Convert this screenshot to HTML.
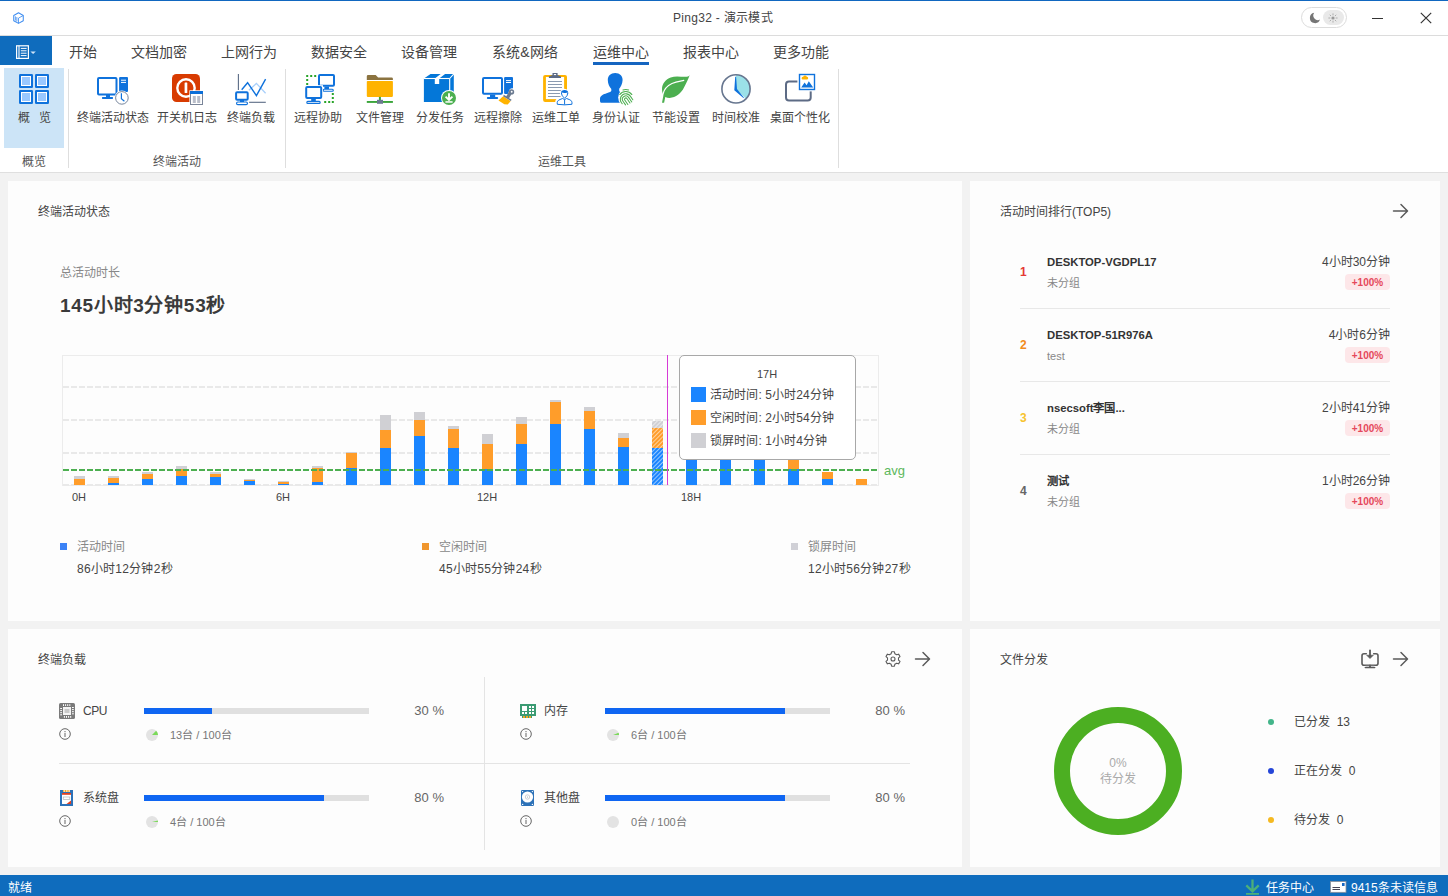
<!DOCTYPE html>
<html lang="zh-CN">
<head>
<meta charset="utf-8">
<title>Ping32 - 演示模式</title>
<style>
*{box-sizing:border-box;margin:0;padding:0}
html,body{width:1448px;height:896px;overflow:hidden}
body{position:relative;background:#f2f2f2;font-family:"Liberation Sans",sans-serif;font-size:12px;color:#444;line-height:1}
.abs{position:absolute}
.t{position:absolute;white-space:nowrap;line-height:16px;height:16px;margin-top:1px}
.c{text-align:center}
.r{text-align:right}
svg{position:absolute;overflow:visible}
/* title bar */
#topline{left:0;top:0;width:1448px;height:1px;background:#1167c0}
#titlebar{left:0;top:1px;width:1448px;height:35px;background:#fff;border-bottom:1px solid #dcdcdc}
#menubar{left:0;top:36px;width:1448px;height:29px;background:#fff}
#filebtn{left:0;top:36px;width:52px;height:29px;background:#0f6cbd}
.tab{font-size:14px;line-height:20px;height:20px;top:41px;color:#444;width:80px;text-align:center}
#ribbon{left:0;top:65px;width:1448px;height:108px;background:#fff;border-bottom:1px solid #dfdfdf}
.rsep{position:absolute;top:69px;width:1px;height:99px;background:#dedede}
.rl{font-size:12px;top:109px;width:90px;text-align:center;color:#444}
.gl{font-size:12px;top:153px;width:90px;text-align:center;color:#555}
.panel{position:absolute;background:#fdfdfd}
.ptitle{font-size:12px;color:#444}
#status{left:0;top:875px;width:1448px;height:21px;background:#0f6cbd;color:#fff}
</style>
</head>
<body>
<div class="abs" id="topline"></div>
<div class="abs" id="titlebar"></div>
<div class="t c" style="left:623px;top:9px;width:200px;font-size:12px;letter-spacing:.3px;color:#444">Ping32 - 演示模式</div>
<div class="abs" id="menubar"></div>
<div class="abs" id="filebtn"></div>
<div class="abs" id="ribbon"></div>
<div class="abs" id="status"></div>

<!-- TABS -->
<div class="t tab" style="left:43px">开始</div>
<div class="t tab" style="left:119px">文档加密</div>
<div class="t tab" style="left:209px">上网行为</div>
<div class="t tab" style="left:299px">数据安全</div>
<div class="t tab" style="left:389px">设备管理</div>
<div class="t tab" style="left:485px">系统&amp;网络</div>
<div class="t tab" style="left:581px">运维中心</div>
<div class="t tab" style="left:671px">报表中心</div>
<div class="t tab" style="left:761px">更多功能</div>
<div class="abs" style="left:593px;top:62px;width:56px;height:3px;background:#1565c0"></div>

<!-- RIBBON -->
<div class="abs" style="left:4px;top:68px;width:60px;height:80px;background:#cce4f7"></div>
<div class="rsep" style="left:68px"></div>
<div class="rsep" style="left:285px"></div>
<div class="rsep" style="left:838px"></div>
<div class="t rl" style="left:-10px;letter-spacing:.7px">概&nbsp;&nbsp;览</div>
<div class="t rl" style="left:68px">终端活动状态</div>
<div class="t rl" style="left:142px">开关机日志</div>
<div class="t rl" style="left:206px">终端负载</div>
<div class="t rl" style="left:273px">远程协助</div>
<div class="t rl" style="left:335px">文件管理</div>
<div class="t rl" style="left:395px">分发任务</div>
<div class="t rl" style="left:453px">远程擦除</div>
<div class="t rl" style="left:511px">运维工单</div>
<div class="t rl" style="left:571px">身份认证</div>
<div class="t rl" style="left:631px">节能设置</div>
<div class="t rl" style="left:691px">时间校准</div>
<div class="t rl" style="left:755px">桌面个性化</div>
<div class="t gl" style="left:-11px">概览</div>
<div class="t gl" style="left:132px">终端活动</div>
<div class="t gl" style="left:517px">运维工具</div>

<!-- PANELS -->
<div class="panel" id="pA" style="left:8px;top:181px;width:954px;height:440px"></div>
<div class="panel" id="pB" style="left:970px;top:181px;width:470px;height:440px"></div>
<div class="panel" id="pC" style="left:8px;top:629px;width:954px;height:238px"></div>
<div class="panel" id="pD" style="left:970px;top:629px;width:470px;height:238px"></div>

<!-- PANEL A -->
<!--PA-START-->
<svg width="1448" height="896" viewBox="0 0 1448 896" style="left:0;top:0" shape-rendering="crispEdges">
<defs><pattern id="hatch" width="3" height="3" patternUnits="userSpaceOnUse" patternTransform="rotate(45)"><rect x="0" y="0" width="0.9" height="3" fill="#fff" fill-opacity="0.55"/></pattern></defs>
<rect x="62.5" y="355.5" width="816" height="129.5" fill="none" stroke="#ececec" stroke-width="1"/>
<line x1="63" y1="387" x2="878" y2="387" stroke="#e9e9e9" stroke-width="2" stroke-dasharray="6 2"/>
<line x1="63" y1="420" x2="878" y2="420" stroke="#e9e9e9" stroke-width="2" stroke-dasharray="6 2"/>
<line x1="63" y1="453" x2="878" y2="453" stroke="#e9e9e9" stroke-width="2" stroke-dasharray="6 2"/>
<line x1="63" y1="485" x2="878" y2="485" stroke="#e9e9e9" stroke-width="2" stroke-dasharray="6 2"/>
<rect x="74" y="476" width="11" height="3" fill="#d0d0d4"/>
<rect x="74" y="479" width="11" height="6" fill="#ff9d2a"/>
<rect x="108" y="476" width="11" height="2" fill="#d0d0d4"/>
<rect x="108" y="478" width="11" height="5" fill="#ff9d2a"/>
<rect x="108" y="483" width="11" height="2" fill="#1a85ff"/>
<rect x="142" y="471.5" width="11" height="2.5" fill="#d0d0d4"/>
<rect x="142" y="474" width="11" height="5" fill="#ff9d2a"/>
<rect x="142" y="479" width="11" height="6" fill="#1a85ff"/>
<rect x="176" y="466" width="11" height="3" fill="#d0d0d4"/>
<rect x="176" y="469" width="11" height="7" fill="#ff9d2a"/>
<rect x="176" y="476" width="11" height="9" fill="#1a85ff"/>
<rect x="210" y="472" width="11" height="2" fill="#d0d0d4"/>
<rect x="210" y="474" width="11" height="3" fill="#ff9d2a"/>
<rect x="210" y="477" width="11" height="8" fill="#1a85ff"/>
<rect x="244" y="479" width="11" height="1" fill="#d0d0d4"/>
<rect x="244" y="480" width="11" height="1" fill="#ff9d2a"/>
<rect x="244" y="481" width="11" height="4" fill="#1a85ff"/>
<rect x="278" y="481" width="11" height="1" fill="#d0d0d4"/>
<rect x="278" y="482" width="11" height="1.7" fill="#ff9d2a"/>
<rect x="278" y="483.7" width="11" height="1.3" fill="#1a85ff"/>
<rect x="312" y="466" width="11" height="1.7" fill="#d0d0d4"/>
<rect x="312" y="467.7" width="11" height="14.3" fill="#ff9d2a"/>
<rect x="312" y="482" width="11" height="3" fill="#1a85ff"/>
<rect x="346" y="452" width="11" height="1" fill="#d0d0d4"/>
<rect x="346" y="453" width="11" height="15" fill="#ff9d2a"/>
<rect x="346" y="468" width="11" height="17" fill="#1a85ff"/>
<rect x="380" y="415" width="11" height="15" fill="#d0d0d4"/>
<rect x="380" y="430" width="11" height="18" fill="#ff9d2a"/>
<rect x="380" y="448" width="11" height="37" fill="#1a85ff"/>
<rect x="414" y="412" width="11" height="8" fill="#d0d0d4"/>
<rect x="414" y="420" width="11" height="16" fill="#ff9d2a"/>
<rect x="414" y="436" width="11" height="49" fill="#1a85ff"/>
<rect x="448" y="426" width="11" height="3" fill="#d0d0d4"/>
<rect x="448" y="429" width="11" height="19" fill="#ff9d2a"/>
<rect x="448" y="448" width="11" height="37" fill="#1a85ff"/>
<rect x="482" y="434" width="11" height="10" fill="#d0d0d4"/>
<rect x="482" y="444" width="11" height="25" fill="#ff9d2a"/>
<rect x="482" y="469" width="11" height="16" fill="#1a85ff"/>
<rect x="516" y="417" width="11" height="7" fill="#d0d0d4"/>
<rect x="516" y="424" width="11" height="20" fill="#ff9d2a"/>
<rect x="516" y="444" width="11" height="41" fill="#1a85ff"/>
<rect x="550" y="400" width="11" height="2" fill="#d0d0d4"/>
<rect x="550" y="402" width="11" height="22" fill="#ff9d2a"/>
<rect x="550" y="424" width="11" height="61" fill="#1a85ff"/>
<rect x="584" y="407" width="11" height="4" fill="#d0d0d4"/>
<rect x="584" y="411" width="11" height="18" fill="#ff9d2a"/>
<rect x="584" y="429" width="11" height="56" fill="#1a85ff"/>
<rect x="618" y="433" width="11" height="5" fill="#d0d0d4"/>
<rect x="618" y="438" width="11" height="9" fill="#ff9d2a"/>
<rect x="618" y="447" width="11" height="38" fill="#1a85ff"/>
<rect x="652" y="421" width="11" height="7" fill="#d0d0d4"/>
<rect x="652" y="428" width="11" height="20" fill="#ff9d2a"/>
<rect x="652" y="448" width="11" height="37" fill="#1a85ff"/>
<rect x="652" y="421" width="11" height="64" fill="url(#hatch)" shape-rendering="auto"/>
<rect x="686" y="400" width="11" height="10" fill="#d0d0d4"/>
<rect x="686" y="410" width="11" height="20" fill="#ff9d2a"/>
<rect x="686" y="430" width="11" height="55" fill="#1a85ff"/>
<rect x="720" y="395" width="11" height="10" fill="#d0d0d4"/>
<rect x="720" y="405" width="11" height="20" fill="#ff9d2a"/>
<rect x="720" y="425" width="11" height="60" fill="#1a85ff"/>
<rect x="754" y="398" width="11" height="10" fill="#d0d0d4"/>
<rect x="754" y="408" width="11" height="20" fill="#ff9d2a"/>
<rect x="754" y="428" width="11" height="57" fill="#1a85ff"/>
<rect x="788" y="440" width="11" height="29.3" fill="#ff9d2a"/>
<rect x="788" y="469.3" width="11" height="15.7" fill="#1a85ff"/>
<rect x="822" y="472.2" width="11" height="6.6" fill="#ff9d2a"/>
<rect x="822" y="478.8" width="11" height="6.2" fill="#1a85ff"/>
<rect x="856" y="478.8" width="11" height="6.2" fill="#ff9d2a"/>
<line x1="63" y1="470" x2="879" y2="470" stroke="#4caf50" stroke-width="2" stroke-dasharray="6 2"/>
<rect x="667" y="355" width="1" height="130" fill="#d63bd6"/>
</svg>
<div class="t ptitle" style="left:38px;top:203px">终端活动状态</div>
<div class="t" style="left:60px;top:264px;color:#888">总活动时长</div>
<div class="t" style="left:60px;top:291px;font-size:19px;line-height:28px;height:28px;font-weight:bold;color:#3a3a3a;letter-spacing:.7px">145小时3分钟53秒</div>
<div class="t c" style="left:59px;top:488px;width:40px;font-size:11px;color:#444">0H</div>
<div class="t c" style="left:263px;top:488px;width:40px;font-size:11px;color:#444">6H</div>
<div class="t c" style="left:467px;top:488px;width:40px;font-size:11px;color:#444">12H</div>
<div class="t c" style="left:671px;top:488px;width:40px;font-size:11px;color:#444">18H</div>
<div class="t" style="left:884px;top:462px;font-size:13px;color:#5cb85c">avg</div>
<!-- tooltip -->
<div class="abs" style="left:679px;top:355px;width:177px;height:105px;background:#fff;border:1px solid #a8a8a8;border-radius:5px"></div>
<div class="t c" style="left:727px;top:365px;width:80px;font-size:11px;color:#444">17H</div>
<div class="abs" style="left:691px;top:387px;width:15px;height:15px;background:#1a85ff"></div>
<div class="abs" style="left:691px;top:410px;width:15px;height:15px;background:#ff9d2a"></div>
<div class="abs" style="left:691px;top:433px;width:15px;height:15px;background:#d0d0d4"></div>
<div class="t" style="left:710px;top:386px;font-size:12px;letter-spacing:.1px;color:#444">活动时间: 5小时24分钟</div>
<div class="t" style="left:710px;top:409px;font-size:12px;letter-spacing:.1px;color:#444">空闲时间: 2小时54分钟</div>
<div class="t" style="left:710px;top:432px;font-size:12px;letter-spacing:.1px;color:#444">锁屏时间: 1小时4分钟</div>
<!-- legend -->
<div class="abs" style="left:60px;top:543px;width:7px;height:7px;background:#3b82f6"></div>
<div class="abs" style="left:422px;top:543px;width:7px;height:7px;background:#f0962e"></div>
<div class="abs" style="left:791px;top:543px;width:7px;height:7px;background:#d0d0d6"></div>
<div class="t" style="left:77px;top:538px;color:#888">活动时间</div>
<div class="t" style="left:439px;top:538px;color:#888">空闲时间</div>
<div class="t" style="left:808px;top:538px;color:#888">锁屏时间</div>
<div class="t" style="left:77px;top:560px;color:#444;letter-spacing:.25px">86小时12分钟2秒</div>
<div class="t" style="left:439px;top:560px;color:#444;letter-spacing:.25px">45小时55分钟24秒</div>
<div class="t" style="left:808px;top:560px;color:#444;letter-spacing:.25px">12小时56分钟27秒</div>
<!--PA-END-->
<!-- PANEL B -->
<!--PB-START-->
<div class="t ptitle" style="left:1000px;top:203px">活动时间排行(TOP5)</div>
<svg width="16" height="14" viewBox="0 0 16 14" style="left:1393px;top:204px"><path d="M0.5 7H14.4M8 .5l6.5 6.5-6.5 6.5" fill="none" stroke="#5a5a5a" stroke-width="1.5" stroke-linecap="round" stroke-linejoin="round"/></svg>
<div class="t" style="left:1020px;top:263px;font-weight:bold;font-size:12px;color:#e53935">1</div>
<div class="t" style="left:1047px;top:253px;font-weight:bold;font-size:11.3px;color:#333">DESKTOP-VGDPL17</div>
<div class="t" style="left:1047px;top:274px;font-size:11px;color:#888">未分组</div>
<div class="t r" style="left:1240px;width:150px;top:253px;font-size:12px;color:#444">4小时30分钟</div>
<div class="abs" style="left:1345px;top:274px;width:45px;height:16px;background:#fde7e9;border-radius:4px"></div>
<div class="t c" style="left:1345px;width:45px;top:274px;font-size:10px;font-weight:bold;color:#e5485b">+100%</div>
<div class="abs" style="left:1020px;top:308px;width:370px;height:1px;background:#e8e8e8"></div>
<div class="t" style="left:1020px;top:336px;font-weight:bold;font-size:12px;color:#f28c1c">2</div>
<div class="t" style="left:1047px;top:326px;font-weight:bold;font-size:11.3px;color:#333">DESKTOP-51R976A</div>
<div class="t" style="left:1047px;top:347px;font-size:11px;color:#888">test</div>
<div class="t r" style="left:1240px;width:150px;top:326px;font-size:12px;color:#444">4小时6分钟</div>
<div class="abs" style="left:1345px;top:347px;width:45px;height:16px;background:#fde7e9;border-radius:4px"></div>
<div class="t c" style="left:1345px;width:45px;top:347px;font-size:10px;font-weight:bold;color:#e5485b">+100%</div>
<div class="abs" style="left:1020px;top:381px;width:370px;height:1px;background:#e8e8e8"></div>
<div class="t" style="left:1020px;top:409px;font-weight:bold;font-size:12px;color:#f7c32e">3</div>
<div class="t" style="left:1047px;top:399px;font-weight:bold;font-size:11.3px;color:#333">nsecsoft李国...</div>
<div class="t" style="left:1047px;top:420px;font-size:11px;color:#888">未分组</div>
<div class="t r" style="left:1240px;width:150px;top:399px;font-size:12px;color:#444">2小时41分钟</div>
<div class="abs" style="left:1345px;top:420px;width:45px;height:16px;background:#fde7e9;border-radius:4px"></div>
<div class="t c" style="left:1345px;width:45px;top:420px;font-size:10px;font-weight:bold;color:#e5485b">+100%</div>
<div class="abs" style="left:1020px;top:454px;width:370px;height:1px;background:#e8e8e8"></div>
<div class="t" style="left:1020px;top:482px;font-weight:bold;font-size:12px;color:#666">4</div>
<div class="t" style="left:1047px;top:472px;font-weight:bold;font-size:11.3px;color:#333">测试</div>
<div class="t" style="left:1047px;top:493px;font-size:11px;color:#888">未分组</div>
<div class="t r" style="left:1240px;width:150px;top:472px;font-size:12px;color:#444">1小时26分钟</div>
<div class="abs" style="left:1345px;top:493px;width:45px;height:16px;background:#fde7e9;border-radius:4px"></div>
<div class="t c" style="left:1345px;width:45px;top:493px;font-size:10px;font-weight:bold;color:#e5485b">+100%</div>
<!--PB-END-->
<!-- PANEL C -->
<!--PC-START-->
<div class="t ptitle" style="left:38px;top:651px">终端负载</div>
<div class="abs" style="left:59px;top:763px;width:851px;height:1px;background:#e4e4e4"></div>
<div class="abs" style="left:484px;top:677px;width:1px;height:173px;background:#e4e4e4"></div>
<div class="t" style="left:83px;top:702px;font-size:12px;letter-spacing:-.5px;color:#444">CPU</div>
<div class="abs" style="left:144px;top:708px;width:225px;height:6px;background:#e0e0e0"></div>
<div class="abs" style="left:144px;top:708px;width:68px;height:6px;background:#0f66f2"></div>
<div class="t r" style="left:393px;width:51px;top:702px;font-size:13px;color:#666">30 %</div>
<svg width="12" height="12" viewBox="0 0 12 12" style="left:59px;top:727.5px"><circle cx="6" cy="6" r="5.3" fill="none" stroke="#666" stroke-width="1"/><rect x="5.5" y="5" width="1" height="4" fill="#666"/><rect x="5.5" y="3" width="1" height="1.2" fill="#666"/></svg>
<svg width="12" height="12" viewBox="0 0 12 12" style="left:146px;top:728.6px"><circle cx="6" cy="6" r="6" fill="#e3e3e3"/><path d="M6 6L12 6A6 6 0 0 0 10.11 1.63Z" fill="#7bd95a"/></svg>
<div class="t" style="left:170px;top:726px;font-size:11px;color:#777">13台 / 100台</div>
<div class="t" style="left:544px;top:702px;font-size:12px;color:#444">内存</div>
<div class="abs" style="left:605px;top:708px;width:225px;height:6px;background:#e0e0e0"></div>
<div class="abs" style="left:605px;top:708px;width:180px;height:6px;background:#0f66f2"></div>
<div class="t r" style="left:854px;width:51px;top:702px;font-size:13px;color:#666">80 %</div>
<svg width="12" height="12" viewBox="0 0 12 12" style="left:520px;top:727.5px"><circle cx="6" cy="6" r="5.3" fill="none" stroke="#666" stroke-width="1"/><rect x="5.5" y="5" width="1" height="4" fill="#666"/><rect x="5.5" y="3" width="1" height="1.2" fill="#666"/></svg>
<svg width="12" height="12" viewBox="0 0 12 12" style="left:607px;top:728.6px"><circle cx="6" cy="6" r="6" fill="#e3e3e3"/><path d="M6 6L12 6A6 6 0 0 0 11.58 3.79Z" fill="#7bd95a"/></svg>
<div class="t" style="left:631px;top:726px;font-size:11px;color:#777">6台 / 100台</div>
<div class="t" style="left:83px;top:789px;font-size:12px;color:#444">系统盘</div>
<div class="abs" style="left:144px;top:795px;width:225px;height:6px;background:#e0e0e0"></div>
<div class="abs" style="left:144px;top:795px;width:180px;height:6px;background:#0f66f2"></div>
<div class="t r" style="left:393px;width:51px;top:789px;font-size:13px;color:#666">80 %</div>
<svg width="12" height="12" viewBox="0 0 12 12" style="left:59px;top:814.5px"><circle cx="6" cy="6" r="5.3" fill="none" stroke="#666" stroke-width="1"/><rect x="5.5" y="5" width="1" height="4" fill="#666"/><rect x="5.5" y="3" width="1" height="1.2" fill="#666"/></svg>
<svg width="12" height="12" viewBox="0 0 12 12" style="left:146px;top:815.6px"><circle cx="6" cy="6" r="6" fill="#e3e3e3"/><path d="M6 6L12 6A6 6 0 0 0 11.81 4.51Z" fill="#7bd95a"/></svg>
<div class="t" style="left:170px;top:813px;font-size:11px;color:#777">4台 / 100台</div>
<div class="t" style="left:544px;top:789px;font-size:12px;color:#444">其他盘</div>
<div class="abs" style="left:605px;top:795px;width:225px;height:6px;background:#e0e0e0"></div>
<div class="abs" style="left:605px;top:795px;width:180px;height:6px;background:#0f66f2"></div>
<div class="t r" style="left:854px;width:51px;top:789px;font-size:13px;color:#666">80 %</div>
<svg width="12" height="12" viewBox="0 0 12 12" style="left:520px;top:814.5px"><circle cx="6" cy="6" r="5.3" fill="none" stroke="#666" stroke-width="1"/><rect x="5.5" y="5" width="1" height="4" fill="#666"/><rect x="5.5" y="3" width="1" height="1.2" fill="#666"/></svg>
<svg width="12" height="12" viewBox="0 0 12 12" style="left:607px;top:815.6px"><circle cx="6" cy="6" r="6" fill="#e3e3e3"/></svg>
<div class="t" style="left:631px;top:813px;font-size:11px;color:#777">0台 / 100台</div>
<!--PC-END-->
<!-- PANEL D -->
<!--PD-START-->
<div class="t ptitle" style="left:1000px;top:651px">文件分发</div>
<svg width="16" height="14" viewBox="0 0 16 14" style="left:1393px;top:652px"><path d="M0.5 7H14.4M8 .5l6.5 6.5-6.5 6.5" fill="none" stroke="#5a5a5a" stroke-width="1.5" stroke-linecap="round" stroke-linejoin="round"/></svg>
<svg width="16" height="14" viewBox="0 0 16 14" style="left:915px;top:652px"><path d="M0.5 7H14.4M8 .5l6.5 6.5-6.5 6.5" fill="none" stroke="#5a5a5a" stroke-width="1.5" stroke-linecap="round" stroke-linejoin="round"/></svg>
<svg width="128" height="128" viewBox="0 0 128 128" style="left:1054px;top:707.3px"><circle cx="64" cy="64" r="56" fill="none" stroke="#4caf22" stroke-width="16"/></svg>
<div class="t c" style="left:1078px;width:80px;top:754px;color:#aaa">0%</div>
<div class="t c" style="left:1078px;width:80px;top:770px;color:#aaa">待分发</div>
<div class="abs" style="left:1268px;top:719px;width:6px;height:6px;border-radius:50%;background:#43b58a"></div>
<div class="t" style="left:1294px;top:713px;font-size:12px;color:#444">已分发&nbsp; 13</div>
<div class="abs" style="left:1268px;top:768px;width:6px;height:6px;border-radius:50%;background:#2546d8"></div>
<div class="t" style="left:1294px;top:762px;font-size:12px;color:#444">正在分发&nbsp; 0</div>
<div class="abs" style="left:1268px;top:817px;width:6px;height:6px;border-radius:50%;background:#f5b921"></div>
<div class="t" style="left:1294px;top:811px;font-size:12px;color:#444">待分发&nbsp; 0</div>
<!--PD-END-->
<!-- ICONS -->
<!--ICONS-START-->
<svg width="16" height="16" viewBox="0 0 16 16" style="left:59px;top:703px"><rect width="16" height="16" rx="1.6" fill="#7a7a7a"/><rect x="4" y="4" width="8" height="8" fill="#f4f4f4"/><rect x="5.5" y="6" width="5" height="4" fill="#c9c9c9"/><rect x="4.0" y="1.2" width="1" height="1.8" fill="#fff"/><rect x="4.9" y="13" width="1" height="1.8" fill="#fff"/><rect x="1.2" y="5.0" width="1.8" height="1" fill="#fff"/><rect x="13" y="4.0" width="1.8" height="1" fill="#fff"/><rect x="6.1" y="1.2" width="1" height="1.8" fill="#fff"/><rect x="7.0" y="13" width="1" height="1.8" fill="#fff"/><rect x="1.2" y="7.1" width="1.8" height="1" fill="#fff"/><rect x="13" y="6.1" width="1.8" height="1" fill="#fff"/><rect x="8.2" y="1.2" width="1" height="1.8" fill="#fff"/><rect x="9.1" y="13" width="1" height="1.8" fill="#fff"/><rect x="1.2" y="9.2" width="1.8" height="1" fill="#fff"/><rect x="13" y="8.2" width="1.8" height="1" fill="#fff"/><rect x="10.3" y="1.2" width="1" height="1.8" fill="#fff"/><rect x="11.2" y="13" width="1" height="1.8" fill="#fff"/><rect x="1.2" y="11.3" width="1.8" height="1" fill="#fff"/><rect x="13" y="10.3" width="1.8" height="1" fill="#fff"/></svg>
<svg width="16" height="14" viewBox="0 0 16 14" style="left:520px;top:704px" shape-rendering="crispEdges"><rect width="16" height="12" fill="#3b9b73"/><rect x="2" y="12" width="10" height="2" fill="#3b9b73"/><rect x="3" y="12" width="2" height="2" fill="#f5a623"/><rect x="6" y="12" width="2" height="2" fill="#f5a623"/><rect x="9" y="12" width="2" height="2" fill="#f5a623"/><rect x="2" y="2" width="5" height="5" fill="#fff"/><rect x="9" y="2" width="2" height="2" fill="#fff"/><rect x="12" y="2" width="2" height="2" fill="#fff"/><rect x="9" y="5" width="2" height="2" fill="#fff"/><rect x="12" y="5" width="2" height="2" fill="#fff"/><rect x="2" y="8" width="2" height="2" fill="#fff"/><rect x="5" y="8" width="2" height="2" fill="#fff"/><rect x="9" y="8" width="2" height="2" fill="#fff"/><rect x="12" y="8" width="2" height="2" fill="#fff"/></svg>
<svg width="13" height="16" viewBox="0 0 13 16" style="left:60px;top:790px"><rect width="13" height="16" fill="#2d72b8"/><rect x="2" y="3" width="9" height="11" fill="#fff"/><rect x="3" y="0" width="7" height="2" fill="#fff"/><rect x="3.2" y="0" width="1.1" height="2" fill="#f5a623"/><rect x="4.9" y="0" width="1.1" height="2" fill="#f5a623"/><rect x="6.6" y="0" width="1.1" height="2" fill="#f5a623"/><rect x="8.3" y="0" width="1.1" height="2" fill="#f5a623"/><rect x="2" y="3" width="9" height="1.8" fill="#e2401f"/><path d="M11 10.5V14H6.5Z" fill="#e2401f"/><rect x="3.2" y="7" width="6.6" height="2.6" fill="none" stroke="#aaa" stroke-width=".6"/></svg>
<svg width="13" height="16" viewBox="0 0 13 16" style="left:521px;top:790px"><rect width="13" height="16" rx="1.3" fill="#2d72b8"/><circle cx="6.5" cy="7" r="5.6" fill="#fff"/><circle cx="6.5" cy="7" r="2.2" fill="none" stroke="#c4c4cc" stroke-width=".8"/><circle cx="6.5" cy="7" r=".6" fill="#9aa"/><circle cx="1.6" cy="1.6" r=".7" fill="#fff"/><circle cx="11.4" cy="1.6" r=".7" fill="#fff"/><circle cx="1.6" cy="14.4" r=".7" fill="#fff"/><circle cx="11.4" cy="14.4" r=".7" fill="#fff"/></svg>
<svg width="18" height="18" viewBox="-9 -9 18 18" style="left:884.1px;top:649.9px"><path d="M1.82 -5.29 L1.41 -7.26 L-1.41 -7.26 L-1.82 -5.29 L-3.67 -4.23 L-5.58 -4.85 L-7.00 -2.41 L-5.50 -1.07 L-5.50 1.07 L-7.00 2.41 L-5.58 4.85 L-3.67 4.23 L-1.82 5.29 L-1.41 7.26 L1.41 7.26 L1.82 5.29 L3.67 4.23 L5.58 4.85 L7.00 2.41 L5.50 1.07 L5.50 -1.07 L7.00 -2.41 L5.58 -4.85 L3.67 -4.23Z" fill="none" stroke="#5a5a5a" stroke-width="1.1" stroke-linejoin="round"/><circle r="2" fill="none" stroke="#5a5a5a" stroke-width="1.1"/></svg>
<svg width="20" height="20" viewBox="1360 649 20 20" style="left:1360px;top:649px"><path d="M1366.3 653.8H1364a2 2 0 0 0-2 2v7.4a2 2 0 0 0 2 2h12a2 2 0 0 0 2-2v-7.4a2 2 0 0 0-2-2h-2.3" fill="none" stroke="#5a5a5a" stroke-width="1.6" stroke-linecap="round"/><path d="M1370 650.3V656" stroke="#5a5a5a" stroke-width="1.8" stroke-linecap="round" fill="none"/><path d="M1366.6 655.2h6.8L1370 658.6Z" fill="#5a5a5a" stroke="#5a5a5a" stroke-width=".6" stroke-linejoin="round"/><path d="M1370 665.2v2.3M1365.2 667.6h9.6" stroke="#5a5a5a" stroke-width="1.4" stroke-linecap="round" fill="none"/><rect x="1365.5" y="665.8" width="9" height="1.2" fill="#c8c8cc"/><path d="M1370 665.2v2.3" stroke="#5a5a5a" stroke-width="1.8" fill="none"/></svg>
<svg width="16" height="17" viewBox="1245 879 16 17" style="left:1245px;top:879px"><path d="M1252.5 879.5V890M1246.3 885.3l6.2 6 6.2-6" fill="none" stroke="#4caf7a" stroke-width="2.3"/><rect x="1246" y="893" width="13" height="1.8" fill="#4caf7a"/></svg>
<svg width="17" height="12" viewBox="1330 881 17 12" style="left:1330px;top:881px"><rect x="1330.5" y="881.5" width="15.5" height="10.8" fill="#fff" stroke="#8a8f98" stroke-width=".8"/><rect x="1342" y="883" width="2.6" height="3" fill="#1767c2"/><rect x="1332.5" y="887" width="7.5" height="1" fill="#445"/><rect x="1332.5" y="889" width="7.5" height="1" fill="#445"/></svg>
<div class="abs" style="left:1301px;top:7px;width:45.5px;height:20.5px;border:1px solid #dcdcdc;border-radius:11px;background:#fff"></div>
<div class="abs" style="left:1323px;top:10px;width:21px;height:15px;border-radius:8px;background:#e9e9e9"></div>
<svg width="12" height="12" viewBox="0 0 12 12" style="left:1309px;top:11.5px"><path d="M5.2 .8A5.2 5.2 0 1 0 11 7.6 4.6 4.6 0 0 1 5.2 .8Z" fill="#757575"/></svg>
<svg width="12" height="12" viewBox="-6 -6 12 12" style="left:1327.4px;top:11.5px"><circle r="1.6" fill="#9a9a9a"/><line x1="2.70" y1="0.00" x2="4.60" y2="0.00" stroke="#a6a6a6" stroke-width=".9"/><line x1="1.91" y1="1.91" x2="3.25" y2="3.25" stroke="#a6a6a6" stroke-width=".9"/><line x1="0.00" y1="2.70" x2="0.00" y2="4.60" stroke="#a6a6a6" stroke-width=".9"/><line x1="-1.91" y1="1.91" x2="-3.25" y2="3.25" stroke="#a6a6a6" stroke-width=".9"/><line x1="-2.70" y1="0.00" x2="-4.60" y2="0.00" stroke="#a6a6a6" stroke-width=".9"/><line x1="-1.91" y1="-1.91" x2="-3.25" y2="-3.25" stroke="#a6a6a6" stroke-width=".9"/><line x1="-0.00" y1="-2.70" x2="-0.00" y2="-4.60" stroke="#a6a6a6" stroke-width=".9"/><line x1="1.91" y1="-1.91" x2="3.25" y2="-3.25" stroke="#a6a6a6" stroke-width=".9"/></svg>
<div class="abs" style="left:1372px;top:17.5px;width:10.5px;height:1.2px;background:#333"></div>
<svg width="12" height="12" viewBox="0 0 12 12" style="left:1419.5px;top:12.3px"><path d="M.8 .8l10.4 10.4M11.2 .8L.8 11.2" stroke="#333" stroke-width="1.2" fill="none"/></svg>
<svg width="11" height="12.2" viewBox="0 0 12 13" style="left:12.5px;top:11.9px"><path d="M6 .7L11.2 3.6V9.4L6 12.3.8 9.4V3.6Z" fill="#fff" stroke="#3d8cf0" stroke-width="1.1" stroke-linejoin="round"/><path d="M6 6.5V12M6 6.5L11 3.8M2.6 4.6v4.6M4.2 5.4v4.8" stroke="#3d8cf0" stroke-width=".9" fill="none"/></svg>
<svg width="24" height="16" viewBox="15 44 24 16" style="left:15px;top:44px"><rect x="16.6" y="45.8" width="11.8" height="12.6" fill="none" stroke="#fff" stroke-width="1.2"/><path d="M19 45.8v12.6" stroke="#fff" stroke-width="1.1"/><path d="M20.8 48.4h5.8M20.8 50.8h5.8M20.8 53.2h5.8M20.8 55.6h5.8" stroke="#fff" stroke-width="1"/><path d="M30.4 51.4h5.4l-2.7 2.7Z" fill="#cfe3f7"/></svg>
<!--ICONS-END-->
<!--RI-START-->
<svg width="32" height="32" viewBox="18 73 32 32" style="left:18px;top:73px"><rect x="19" y="74" width="14" height="14" rx="1.2" fill="#0f72dc"/><rect x="21" y="76" width="10" height="10" fill="#fff"/><rect x="22" y="77" width="8" height="8" fill="#99c8ff"/><rect x="35" y="74" width="14" height="14" rx="1.2" fill="#0f72dc"/><rect x="37" y="76" width="10" height="10" fill="#fff"/><rect x="38" y="77" width="8" height="8" fill="#99c8ff"/><rect x="19" y="90" width="14" height="14" rx="1.2" fill="#0f72dc"/><rect x="21" y="92" width="10" height="10" fill="#fff"/><rect x="22" y="93" width="8" height="8" fill="#99c8ff"/><rect x="35" y="90" width="14" height="14" rx="1.2" fill="#0f72dc"/><rect x="37" y="92" width="10" height="10" fill="#fff"/><rect x="38" y="93" width="8" height="8" fill="#99c8ff"/></svg>
<svg width="34" height="34" viewBox="96 73 34 34" style="left:96px;top:73px"><rect x="98.0" y="78.0" width="18.5" height="16.400000000000006" rx="1" fill="#fff" stroke="#0f72dc" stroke-width="2"/><rect x="106" y="95" width="4" height="2.4" fill="#0f72dc"/><rect x="102" y="97" width="11" height="1.9" rx=".6" fill="#0f72dc"/><rect x="119.1" y="77" width="8.9" height="15" rx="1" fill="#0f72dc"/><rect x="121" y="79.7" width="5" height="1" fill="#fff"/><rect x="121" y="81.9" width="5" height="1" fill="#fff"/><circle cx="121.9" cy="97.9" r="7.4" fill="#fff"/><circle cx="121.9" cy="97.9" r="6.3" fill="#fff" stroke="#76859c" stroke-width="1"/><path d="M121.4 93.3V98.7L124.4 101.2" fill="none" stroke="#0f72dc" stroke-width="1.2"/></svg>
<svg width="34" height="34" viewBox="171 73 34 34" style="left:171px;top:73px"><rect x="172" y="74" width="28" height="28" rx="4.5" fill="#d83b01"/><circle cx="186" cy="88" r="8.7" fill="none" stroke="#fff" stroke-width="2.4"/><rect x="184.6" y="82.6" width="2.7" height="10.4" rx=".5" fill="#fff"/><rect x="189.4" y="90.3" width="14.2" height="15" fill="#fff"/><rect x="190.5" y="91.5" width="12" height="13" fill="#fff" stroke="#7a8599" stroke-width="1"/><rect x="190" y="91" width="13" height="3" fill="#0d6fd8"/><rect x="192.8" y="96" width="3" height="7" fill="#b9bdc9"/><rect x="197.2" y="96" width="3" height="7" fill="#b9bdc9"/></svg>
<svg width="34" height="34" viewBox="234 73 34 34" style="left:234px;top:73px"><path d="M238.4 74.1V90" stroke="#5a6b85" stroke-width="1.1" fill="none"/><path d="M249.1 102.3H265.8" stroke="#5a6b85" stroke-width="1.1" fill="none"/><path d="M248.9 90.2L256.4 83.4L265.6 93.3" stroke="#a9d0fb" stroke-width="1.3" fill="none"/><path d="M241.7 89.8L247.6 82.7L256.4 95.6L265.6 79.2" stroke="#0f72dc" stroke-width="1.4" fill="none"/><rect x="236.1" y="92.3" width="11.6" height="7.4" rx="1" fill="#fff" stroke="#0f72dc" stroke-width="2"/><rect x="236.6" y="102" width="10.8" height="2.6" rx="1.2" fill="#fff" stroke="#0f72dc" stroke-width="1.2"/><rect x="240" y="100" width="4" height="2" fill="#0f72dc"/></svg>
<svg width="34" height="34" viewBox="303 73 34 34" style="left:303px;top:73px"><rect x="306.2" y="75" width="2" height="2" fill="#28a428"/><rect x="310.2" y="75" width="2" height="2" fill="#28a428"/><rect x="314.2" y="75" width="2" height="2" fill="#28a428"/><rect x="306.2" y="79" width="2" height="2" fill="#28a428"/><rect x="306.2" y="83" width="2" height="2" fill="#28a428"/><rect x="324.2" y="101" width="2" height="2" fill="#28a428"/><rect x="328.2" y="101" width="2" height="2" fill="#28a428"/><rect x="331.8" y="93" width="2" height="2" fill="#28a428"/><rect x="331.8" y="97" width="2" height="2" fill="#28a428"/><rect x="331.8" y="101" width="2" height="2" fill="#28a428"/><rect x="319" y="75" width="15" height="10.8" rx="1" fill="#fff" stroke="#0f72dc" stroke-width="2"/><rect x="324.4" y="86.5" width="4.6" height="2.6" fill="#0f72dc"/><rect x="323.1" y="89.3" width="10.2" height="2" rx="1" fill="#fff" stroke="#0f72dc" stroke-width="1.1"/><rect x="304.4" y="85.2" width="18.6" height="14.4" fill="#fff"/><rect x="306.2" y="87.1" width="15" height="10.8" rx="1" fill="#fff" stroke="#0f72dc" stroke-width="2"/><rect x="311.2" y="98.6" width="4.6" height="2.6" fill="#0f72dc"/><rect x="306.8" y="101.4" width="13.4" height="2" rx="1" fill="#fff" stroke="#0f72dc" stroke-width="1.1"/></svg>
<svg width="34" height="34" viewBox="365 73 34 34" style="left:365px;top:73px"><path d="M366.8 76.2a1.3 1.3 0 0 1 1.3-1.3h7.6l2.4 2.6h13.5a1.3 1.3 0 0 1 1.3 1.3v1.2H366.8Z" fill="#8b7340"/><rect x="366.8" y="80.9" width="26.1" height="16" rx=".8" fill="#ffb300"/><rect x="378.9" y="96.9" width="2" height="4" fill="#3aa53a"/><rect x="366.8" y="101" width="26.1" height="1.9" fill="#3aa53a"/><rect x="377" y="99.8" width="6" height="4" fill="#6b7a90"/></svg>
<svg width="36" height="36" viewBox="422 72 36 36" style="left:422px;top:72px"><path d="M423.9 78.6L430.5 73.9H453.8V96.2L449.5 101.9H423.9Z" fill="#0477d8"/><path d="M449.7 78.5L453.9 73.8M449.7 78.5V101.9" stroke="#fff" stroke-width="1.1" fill="none"/><path d="M423.9 78.5H449.7" stroke="#fff" stroke-width="1.1" fill="none"/><path d="M434.8 78.6L441 73.8H445.4L439.2 78.6V83.9H434.8Z" fill="#fff"/><circle cx="449" cy="98" r="8" fill="#fff"/><circle cx="449" cy="98" r="7" fill="#4caf50"/><path d="M449 93.2V99.6M445.6 96.6l3.4 3.4 3.4-3.4" stroke="#fff" stroke-width="1.9" fill="none"/><rect x="445.4" y="101.2" width="7.2" height="1.5" fill="#fff"/></svg>
<svg width="36" height="36" viewBox="481 72 36 36" style="left:481px;top:72px"><rect x="483" y="77.9" width="19" height="15.9" rx="1" fill="#fff" stroke="#0f72dc" stroke-width="2"/><rect x="490" y="94.6" width="5.2" height="2.6" fill="#0f72dc"/><rect x="486.9" y="97" width="11.2" height="2" rx=".8" fill="#0f72dc"/><rect x="504.1" y="76.9" width="8.9" height="17" rx="1" fill="#0f72dc"/><rect x="506" y="80.1" width="5" height="1" fill="#fff"/><rect x="506" y="82" width="5" height="1" fill="#fff"/><path d="M498.5 100.6L503 96.2L503.4 95.4L507 97.4L509.6 92.6Q510 89.2 512.4 89.2Q514.4 89.6 514.2 92L511 99.4L511.3 100.4L510.7 101.1L507.7 104.6L504.3 104.2Z" fill="#fff" stroke="#fff" stroke-width="2" stroke-linejoin="round"/><path d="M507.3 98L510.4 92.6" stroke="#6b7a90" stroke-width="3.4" stroke-linecap="butt" fill="none"/><circle cx="511.5" cy="91.9" r="2.7" fill="#6b7a90"/><circle cx="511.7" cy="91.7" r=".95" fill="#fff"/><path d="M503.1 96.3L510.7 101.1L507.7 104.6L504.3 104.2L498.5 100.6Z" fill="#ffb300"/><path d="M503.5 95.5L511.2 100.3" stroke="#6b7a90" stroke-width="1.5" fill="none"/></svg>
<svg width="36" height="36" viewBox="541 72 36 36" style="left:541px;top:72px"><rect x="543.1" y="74.9" width="23.9" height="27" rx="2" fill="#ffb300"/><rect x="545.9" y="77" width="18.2" height="22.1" fill="#fff"/><path d="M548.9 78V76.6L552.5 75V73.1H557.6V75L561 76.6V78Z" fill="#5d6b85"/><rect x="553.9" y="74" width="2.2" height="1.1" fill="#fff"/><rect x="548" y="81.0" width="14" height="1" fill="#8a9ab0"/><rect x="548" y="84.0" width="14" height="1" fill="#8a9ab0"/><rect x="548" y="87.0" width="14" height="1" fill="#8a9ab0"/><rect x="548" y="90.0" width="14" height="1" fill="#8a9ab0"/><rect x="548" y="93.0" width="14" height="1" fill="#8a9ab0"/><rect x="548" y="96.0" width="14" height="1" fill="#8a9ab0"/><path d="M556.2 104.8V102Q556.2 99 560.4 98.2L564.6 96.8L568.8 98.2Q572.8 99 572.8 102V104.8Z" fill="#fff" stroke="#fff" stroke-width="2"/><ellipse cx="564.6" cy="94" rx="4.7" ry="5.2" fill="#fff"/><path d="M557.3 104.3Q556.6 100.6 560 99.5L562.6 98.5L564.6 99.6L566.6 98.5L569.2 99.5Q572.6 100.6 571.9 104.3Q564.6 105.4 557.3 104.3Z" fill="#fff" stroke="#0f72dc" stroke-width="1" stroke-linejoin="round"/><path d="M564.6 99.6V104.6" fill="none" stroke="#0f72dc" stroke-width="1"/><path d="M561.4 93Q561.4 96 564.6 98.2Q567.8 96 567.8 93" fill="#fff" stroke="#0f72dc" stroke-width="1"/><path d="M561 93.6V92.4Q561.2 89.9 564.6 89.9Q568 89.9 568.2 92.4V93.6L567.4 92.4Q564.6 93.4 561.8 92.6Z" fill="#0f72dc"/></svg>
<svg width="36" height="36" viewBox="598 72 36 36" style="left:598px;top:72px"><path d="M615.2 72.9C619.8 72.9 622.7 75.8 622.6 80C622.5 84 620.6 87.2 619.2 88.8L619.2 90.6C619.2 91.6 620.5 92.2 621.5 92.6L626 94.5V102.8H602C600.4 102.8 600 101.6 600 100.4V98.8C600 95.6 603.6 94.2 606.6 93.2C609.6 92.2 611.4 91.6 611.4 90.2L611.2 88.8C609.6 87.2 607.8 84 607.8 80C607.7 75.8 610.6 72.9 615.2 72.9Z" fill="#0f72dc"/><ellipse cx="625.9" cy="97.6" rx="7.7" ry="9" fill="#fff"/><g fill="none" stroke="#4caf50" stroke-width="1.05" stroke-linecap="round"><path d="M622.93 89.93A9.8 9.8 0 0 1 628.67 89.93"/><path d="M619.73 94.56A7.7 7.7 0 0 1 631.87 94.56"/><g transform="rotate(-35 625.8 99.3)"><path d="M620.3 100.89999999999999V99.3a5.5 5.5 0 0 1 11.0 0V103.7"/><path d="M622.4 103.7V99.3a3.4 3.4 0 0 1 6.8 0V104.89999999999999"/><path d="M624.5 104.7V99.3a1.3 1.3 0 0 1 2.6 0V104.7"/></g></g></svg>
<svg width="34" height="34" viewBox="660 73 34 34" style="left:660px;top:73px"><path d="M689.7 75.1C688.8 76.6 687.6 76.8 685 76.8C680 76.7 675 75.9 670.7 77.4C665.8 79.1 662 83.5 662 89C662 90.6 662.2 91.8 662.6 92.9L663.4 95.6L662 102.8H664.1L665.3 97C666.6 97.6 668 97.9 669.6 97.9C676 97.9 681 93.5 684 87.6C686.5 82.6 688.6 78.6 689.7 75.1Z" fill="#4caf50"/><path d="M662.9 94.6C663.8 89.5 667 85.6 672 83.4C676 81.8 680 81.2 683.8 80.4" fill="none" stroke="#fff" stroke-width="1.1" stroke-linecap="round"/></svg>
<svg width="34" height="34" viewBox="720 72 34 34" style="left:720px;top:72px"><circle cx="736" cy="88.9" r="14.1" fill="#fff"/><path d="M736 88.9V74.80000000000001A14.1 14.1 0 0 1 745.97 98.87Z" fill="#9be1e8"/><path d="M735.2 76.7L736.1 76.7L737 89L744.6 98.4L742.8 97.5L734.3 90.3Z" fill="#0f72dc"/><circle cx="736" cy="88.9" r="14.1" fill="none" stroke="#67768f" stroke-width="1.6"/></svg>
<svg width="34" height="34" viewBox="784 72 34 34" style="left:784px;top:72px"><rect x="786" y="81.4" width="24.7" height="19" rx="3" fill="#fff" stroke="#5d6b85" stroke-width="2"/><rect x="797.4" y="72.6" width="19" height="18.8" fill="#fff"/><rect x="799.5" y="74.5" width="15" height="15" fill="#fff" stroke="#0f72dc" stroke-width="1.4"/><path d="M801.2 87.6L804.6 82.6L806.6 85.2L808.8 81.2L813.2 87.6Z" fill="#0f72dc"/><path d="M802.6 79.6a1.5 1.5 0 0 1 .6-2.9 2 2 0 0 1 3.6 0 1.5 1.5 0 0 1 .4 2.9Z" fill="#ffb300"/></svg>
<!--RI-END-->

<!-- STATUS -->
<div class="t" style="left:8px;top:879px;color:#fff;font-size:12px">就绪</div>
<div class="t" style="left:1266px;top:879px;color:#fff;font-size:12px">任务中心</div>
<div class="t" style="left:1351px;top:879px;color:#fff;font-size:12px">9415条未读信息</div>
</body>
</html>
